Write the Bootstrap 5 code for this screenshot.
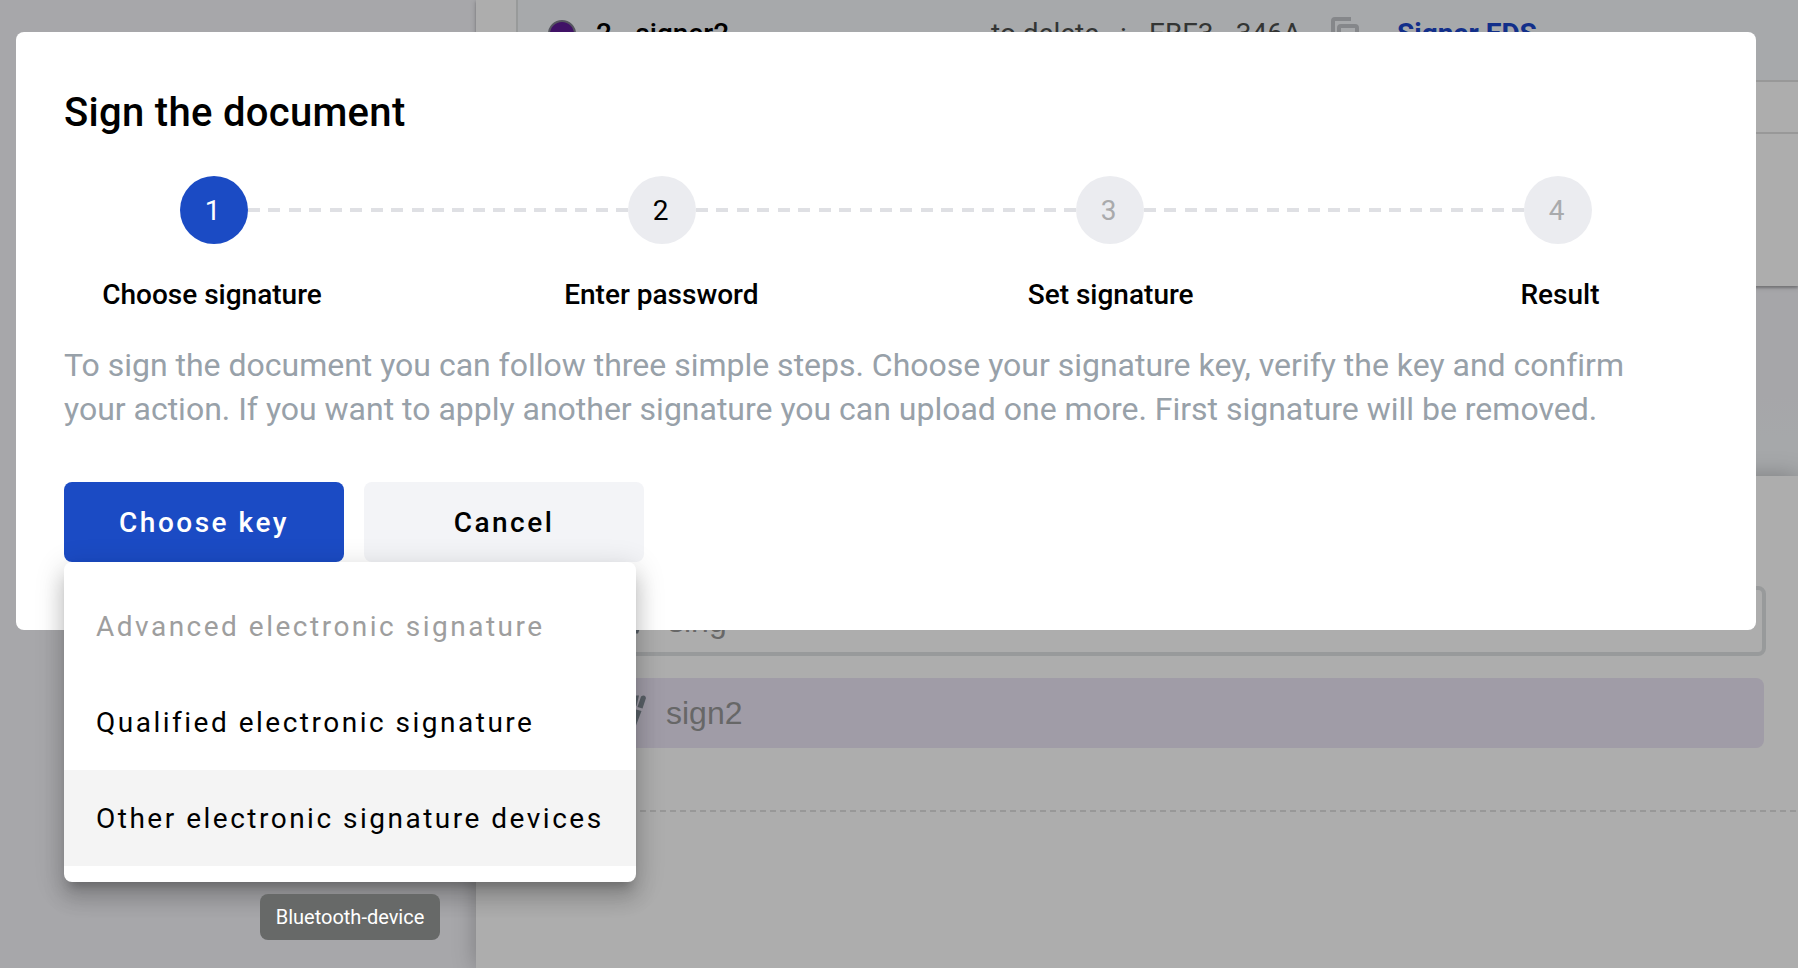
<!DOCTYPE html>
<html lang="en">
<head>
<meta charset="utf-8">
<title>Sign the document</title>
<link href="https://cdn.jsdelivr.net/npm/bootstrap@5.3.0/dist/css/bootstrap.min.css" rel="stylesheet">
<style>
body{font-family:Roboto,"Liberation Sans",sans-serif;color:#000;width:1798px;height:968px;overflow:hidden;background:#a7a7aa;position:relative}
.page{height:968px}
.side{width:476px}
.main-top{height:286px;background:#adadad;padding-left:40px;position:relative;box-shadow:0 2px 2px rgba(0,0,0,.2),0 1px 6px rgba(0,0,0,.2)}
.signer{height:82px;background:#a7a9ab;border-left:2px solid #989a9a;border-bottom:2px solid #989898;padding:14px 0 0 30px;font-size:28px;line-height:40px;white-space:nowrap;color:#333534}
.band{height:52px;border-bottom:2px solid #989898}
.dot{width:28px;height:28px;border-radius:50%;background:#401266;border:2px solid #55555f;margin:6px 20px 0 0}
.nm{width:395px;font-weight:500;color:#000}
.todo{width:158px}
.keyid{width:182px}
.lnk{color:#122f8a;font-weight:700;margin-left:38px}
.gap-band{height:190px;background:linear-gradient(#a6a6a9 110px,#a6a8aa 150px)}
.sheet{background:#adadad;padding:110px 0 0 44px;position:relative;box-shadow:0 0 22px rgba(0,0,0,.26)}
.field{width:1246px;height:70px;border:4px solid #989a9b;border-radius:8px;padding:0 0 0 110px;margin-bottom:22px}
.field.tint{border:0;background:#a09ca7;width:1244px;padding-left:112px;margin-bottom:62px}
.field span{font:32px/70px "Liberation Sans",sans-serif;color:#676767}
.rule{height:2px;background:repeating-linear-gradient(90deg,#989898 0 6px,transparent 6px 10px)}
.dlg{position:absolute;left:16px;top:32px;width:1740px;height:598px;background:#fff;border-radius:8px}
.dlg h1{font-size:40px;font-weight:500;line-height:48px;letter-spacing:.3px;margin:0;padding:57px 0 0 48px}
.steps{padding:39px 164px 0}
.num{width:68px;height:68px;border-radius:50%;background:#ebecf0;font-size:28px;color:#a9aaac;padding:1px 3px 0 0}
.num.on{background:#1b4bc4;color:#fff}
.num.next{color:#000}
.dash{height:4px;background:repeating-linear-gradient(90deg,#dfe0e4 0 12px,#fff 12px 20.444px)}
.labels{padding:31px 86px 0;font-size:28px;line-height:40px;font-weight:500}
.labels div{width:220px;text-align:center;white-space:nowrap}
.intro{font-size:32px;line-height:44px;letter-spacing:-.01px;color:#98a1a9;margin:28px 0 0 48px;white-space:nowrap}
.act{width:280px;height:80px;border:0;border-radius:8px;font-size:28px;font-weight:500;letter-spacing:2.5px;background:#f3f4f7;color:#000;padding:8px 12px 6px}
.act.go{background:#1b4bc4;color:#fff}
.menu{position:absolute;left:64px;top:562px;width:572px;height:320px;background:#fff;border-radius:8px;padding:16px 0;box-shadow:0 10px 10px -6px rgba(0,0,0,.2),0 16px 20px 2px rgba(0,0,0,.14),0 6px 28px 4px rgba(0,0,0,.12)}
.menu div{height:96px;line-height:98px;padding-left:32px;font-size:28px;letter-spacing:2.5px;white-space:nowrap}
.menu .off{color:#9e9e9e}
.menu .hov{background:#f4f4f4}
.tip{position:absolute;left:260px;top:894px;width:180px;height:46px;border-radius:8px;background:#676968;color:#fff;font-size:20px;line-height:46px;text-align:center}
</style>
</head>
<body>
<div class="page d-flex">
  <aside class="side flex-shrink-0"></aside>
  <main class="flex-grow-1 d-flex flex-column">
    <section class="main-top">
      <div class="signer d-flex align-items-start">
        <span class="dot flex-shrink-0"></span>
        <span class="nm">2 - signer2</span>
        <span class="todo">to delete&nbsp;&nbsp; :</span>
        <span class="keyid">EBF3...346A</span>
        <svg width="28" height="34" viewBox="0 0 28 34" fill="none" stroke="#85878a" stroke-width="4" class="flex-shrink-0" style="margin-top:3px"><path d="M20 2H4a2 2 0 0 0-2 2v18"/><rect x="8" y="9" width="18" height="22" rx="2"/></svg>
        <span class="lnk">Signer EDS</span>
      </div>
      <div class="band"></div>
    </section>
    <div class="gap-band"></div>
    <section class="sheet flex-grow-1">
      <div class="field d-flex align-items-center">
        <svg width="34" height="40" viewBox="0 0 34 40" fill="#596067"><path d="M3 2.5h3L3.500 13 0 12zM9 3.500q4-2.500 5 1.500L10.500 15.500 5.500 14zM4 16.500l5.500 1.500L4 32.500H0z"/></svg><span>sing</span>
      </div>
      <div class="field tint d-flex align-items-center">
        <svg width="34" height="40" viewBox="0 0 34 40" fill="#596067"><path d="M3 2.500h4L4.500 13 0 12zM9 3.500q4-2.500 5 1.500L10.500 15.500 5.500 14zM4 16.500l5.500 1.500L4 32.500H0z"/></svg><span>sign2</span>
      </div>
      <div class="rule"></div>
    </section>
  </main>
</div>
<div class="dlg">
  <h1>Sign the document</h1>
  <div class="steps d-flex align-items-center">
    <div class="num on d-flex align-items-center justify-content-center">1</div><div class="dash flex-grow-1"></div>
    <div class="num next d-flex align-items-center justify-content-center">2</div><div class="dash flex-grow-1"></div>
    <div class="num d-flex align-items-center justify-content-center">3</div><div class="dash flex-grow-1"></div>
    <div class="num d-flex align-items-center justify-content-center">4</div>
  </div>
  <div class="labels d-flex justify-content-between"><div>Choose signature</div><div>Enter password</div><div>Set signature</div><div>Result</div></div>
  <p class="intro">To sign the document you can follow three simple steps. Choose your signature key, verify the key and confirm<br>your action. If you want to apply another signature you can upload one more. First signature will be removed.</p>
  <div class="d-flex" style="gap:20px;padding:51px 0 0 48px">
    <button class="btn act go">Choose key</button><button class="btn act">Cancel</button>
  </div>
</div>
<div class="menu"><div class="off">Advanced electronic signature</div><div>Qualified electronic signature</div><div class="hov">Other electronic signature devices</div></div>
<div class="tip">Bluetooth-device</div>
<script src="https://cdn.jsdelivr.net/npm/bootstrap@5.3.0/dist/js/bootstrap.bundle.min.js"></script>
</body>
</html>
